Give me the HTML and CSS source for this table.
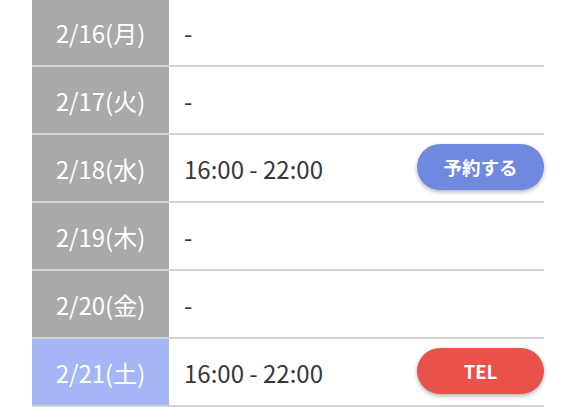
FILE: index.html
```html
<!DOCTYPE html>
<html lang="ja">
<head>
<meta charset="utf-8">
<link rel="stylesheet" href="styles.css">
</head>
<body>
<div class="schedule">
  <div class="row">
    <div class="date">2/16(月)</div>
    <div class="info"><span class="time">-</span></div>
  </div>
  <div class="row">
    <div class="date">2/17(火)</div>
    <div class="info"><span class="time">-</span></div>
  </div>
  <div class="row">
    <div class="date">2/18(水)</div>
    <div class="info"><span class="time">16:00 - 22:00</span><a class="btn btn-reserve">予約する</a></div>
  </div>
  <div class="row">
    <div class="date">2/19(木)</div>
    <div class="info"><span class="time">-</span></div>
  </div>
  <div class="row">
    <div class="date">2/20(金)</div>
    <div class="info"><span class="time">-</span></div>
  </div>
  <div class="row">
    <div class="date sat">2/21(土)</div>
    <div class="info"><span class="time">16:00 - 22:00</span><a class="btn btn-tel">TEL</a></div>
  </div>
</div>
</body>
</html>
```

FILE: styles.css
```css
html, body {
  margin: 0;
  padding: 0;
  background: #ffffff;
}
body {
  font-family: "Noto Sans CJK JP", "Noto Sans", sans-serif;
  overflow: hidden;
}
.schedule {
  margin: -1px 32px 0 32px;
  display: flex;
  flex-direction: column;
}
.row {
  display: flex;
  height: 66px;
  border-bottom: 2px solid #d2d2d2;
}
.date {
  width: 137px;
  margin-right: 2px;
  background: #a9a9a9;
  color: #ffffff;
  font-size: 24px;
  font-weight: 400;
  display: flex;
  align-items: center;
  justify-content: center;
}
.date.sat {
  background: #a4b6f6;
}
.info {
  flex: 1;
  display: flex;
  align-items: center;
  justify-content: space-between;
  padding-left: 13px;
}
.time {
  font-size: 24px;
  font-weight: 400;
  color: #383838;
}
.btn {
  width: 127px;
  height: 46px;
  border-radius: 23px;
  display: flex;
  align-items: center;
  justify-content: center;
  color: #ffffff;
  font-weight: bold;
  font-size: 18.5px;
  box-shadow: 0 2px 4px rgba(0, 0, 0, 0.3);
  margin-top: -2px;
}
.btn-reserve {
  background: #7089e0;
}
.btn-tel {
  background: #e8524a;
}
```
